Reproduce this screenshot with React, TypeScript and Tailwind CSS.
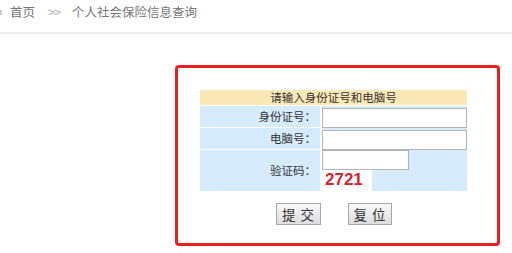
import React from 'react'

const cjk = { fontFamily: '"Noto Sans CJK SC", "Noto Sans", sans-serif' }

function Breadcrumb() {
  return (
    <div className="relative flex h-[32px] items-start pt-[4px] text-[12.5px] leading-[16px] text-[#777]" style={cjk}>
      <span className="absolute left-0 top-[10px] h-[5px] w-[2px] bg-[#ccc]" />
      <span className="ml-[10px]">首页</span>
      <span className="ml-[13px] tracking-[-1px] text-[#aaa]">&gt;&gt;</span>
      <span className="ml-[12px]">个人社会保险信息查询</span>
    </div>
  )
}

function Row({ label, h, children }: { label: string; h: string; children: React.ReactNode }) {
  return (
    <>
      <div className={`${h} flex items-center justify-end bg-[#d6ecfc] pr-[4px] text-[11.5px] text-[#333]`}>
        {label}
      </div>
      <div className={`${h} bg-[#d6ecfc]`}>{children}</div>
    </>
  )
}

function Btn({ a, b, w }: { a: string; b: string; w: string }) {
  return (
    <button
      className={`${w} flex h-[22px] items-center justify-center gap-[5px] border border-[#a8a8a8] bg-gradient-to-b from-[#fafafa] to-[#dcdcdc] text-[13.5px] text-[#333]`}
    >
      <span>{a}</span>
      <span>{b}</span>
    </button>
  )
}

export default function App() {
  return (
    <div className="h-[253px] w-[512px] overflow-hidden bg-white" style={cjk}>
      <Breadcrumb />
      <div className="h-[2px] bg-[#eeeeee]" />
      <div className="ml-[175px] mt-[31px] h-[181px] w-[325px] rounded-[4px] border-[3px] border-[#ec1f1f] pl-[22px] pt-[22px]">
        <div className="grid w-[267px] grid-cols-[120px_145px] gap-x-[2px] gap-y-[1px]">
          <div className="col-span-2 flex h-[15px] items-center justify-center bg-[#fae8b6] text-[11.5px] text-[#333]">
            请输入身份证号和电脑号
          </div>
          <Row label="身份证号：" h="h-[21px]">
            <input className="h-[20px] w-[145px] border border-[#b4b4b4] bg-white outline-none" />
          </Row>
          <Row label="电脑号：" h="h-[21px]">
            <input className="h-[20px] w-[145px] border border-[#b4b4b4] bg-white outline-none" />
          </Row>
          <Row label="验证码：" h="h-[41px]">
            <div className="flex flex-col">
              <input className="h-[20px] w-[87px] border border-[#b4b4b4] bg-white outline-none" />
              <div
                className="h-[21px] w-[50px] bg-white pl-[3px] text-[17px] font-bold leading-[20px] text-[#cf2630]"
                style={{ fontFamily: '"Liberation Sans", Arial, sans-serif' }}
              >
                2721
              </div>
            </div>
          </Row>
        </div>
        <div className="mt-[12px] flex w-[267px] justify-center gap-[27px]">
          <Btn a="提" b="交" w="w-[45px]" />
          <Btn a="复" b="位" w="w-[44px]" />
        </div>
      </div>
    </div>
  )
}
